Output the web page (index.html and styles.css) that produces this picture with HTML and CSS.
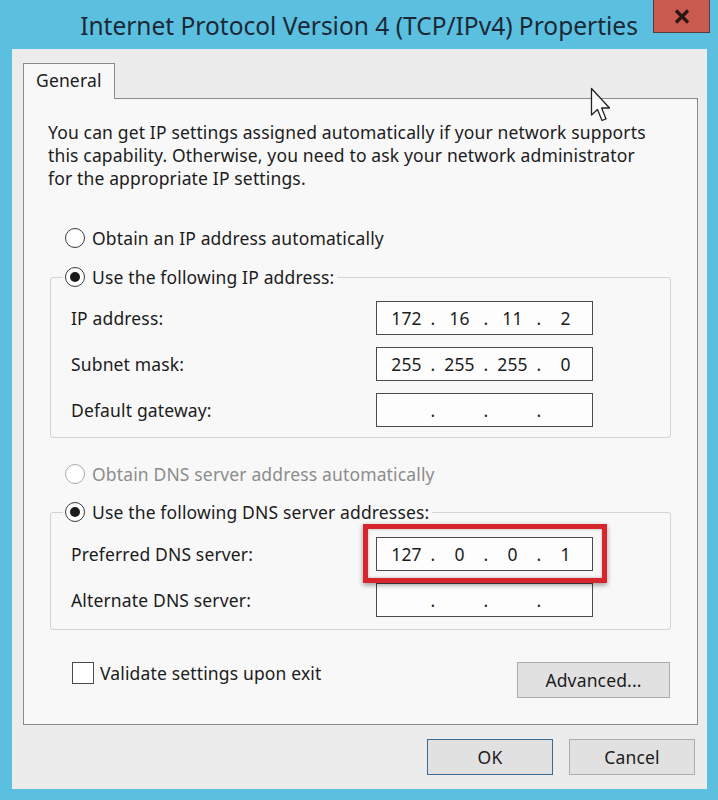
FILE: index.html
```html
<!DOCTYPE html>
<html>
<head>
<meta charset="utf-8">
<link rel="stylesheet" href="styles.css">
</head>
<body>
<div class="titlebar">
  <div class="title">Internet Protocol Version 4 (TCP/IPv4) Properties</div>
  <div class="close">
    <svg width="16" height="15" viewBox="0 0 16 15"><path d="M2 1.5 L14 13.5 M14 1.5 L2 13.5" stroke="#2a1714" stroke-width="3.4" fill="none"/></svg>
  </div>
</div>
<div class="dialog">
  <div class="tabs"><div class="tab">General</div></div>
  <div class="panel">
    <p class="intro">You can get IP settings assigned automatically if your network supports<br>this capability. Otherwise, you need to ask your network administrator<br>for the appropriate IP settings.</p>
    <div class="radio-row first"><span class="radio"></span><span>Obtain an IP address automatically</span></div>
    <fieldset class="group ip-group">
      <legend><span class="radio checked"></span><span>Use the following IP address:</span></legend>
      <div class="field">
        <span>IP address:</span>
        <div class="ipbox"><span>172</span><i>.</i><span>16</span><i>.</i><span>11</span><i>.</i><span>2</span></div>
      </div>
      <div class="field">
        <span>Subnet mask:</span>
        <div class="ipbox"><span>255</span><i>.</i><span>255</span><i>.</i><span>255</span><i>.</i><span>0</span></div>
      </div>
      <div class="field">
        <span>Default gateway:</span>
        <div class="ipbox"><span></span><i>.</i><span></span><i>.</i><span></span><i>.</i><span></span></div>
      </div>
    </fieldset>
    <div class="radio-row disabled"><span class="radio"></span><span>Obtain DNS server address automatically</span></div>
    <fieldset class="group dns-group">
      <legend><span class="radio checked"></span><span>Use the following DNS server addresses:</span></legend>
      <div class="field">
        <span>Preferred DNS server:</span>
        <div class="ipbox marked"><span>127</span><i>.</i><span>0</span><i>.</i><span>0</span><i>.</i><span>1</span><b class="highlight"></b></div>
      </div>
      <div class="field">
        <span>Alternate DNS server:</span>
        <div class="ipbox"><span></span><i>.</i><span></span><i>.</i><span></span><i>.</i><span></span></div>
      </div>
    </fieldset>
    <div class="bottom-row">
      <label class="check"><span class="box"></span><span>Validate settings upon exit</span></label>
      <button class="btn advanced">Advanced...</button>
    </div>
  </div>
  <div class="actions">
    <button class="btn default">OK</button>
    <button class="btn">Cancel</button>
  </div>
</div>
<svg class="cursor" width="22" height="38" viewBox="0 0 22 38">
  <path d="M1.5 1.5 V28 L7.5 22.5 L12 33.5 L16 31.8 L11.6 21 L19.5 21 Z" fill="#fff" stroke="#222" stroke-width="1.3" stroke-linejoin="round"/>
</svg>
</body>
</html>
```
FILE: styles.css
```css
html, body {
  margin: 0;
  padding: 0;
}
body {
  width: 718px;
  height: 800px;
  overflow: hidden;
  position: relative;
  background: #5bc0e0;
  font-family: "Noto Sans", "Open Sans", sans-serif;
  color: #1c1c1c;
}
.titlebar {
  height: 49px;
  display: flex;
  align-items: center;
  justify-content: center;
  position: relative;
}
.title {
  font-size: 24.5px;
  color: #1b2836;
  margin-top: 1px;
}
.close {
  position: absolute;
  top: 0;
  right: 8px;
  width: 57px;
  height: 33px;
  box-sizing: border-box;
  background: #c95a50;
  border: 1px solid #5a3a3a;
  border-top: none;
  display: flex;
  align-items: center;
  justify-content: center;
}
.dialog {
  margin-left: 12px;
  width: 695px;
  height: 740px;
  box-sizing: border-box;
  background: #ececec;
  padding: 14px 9px 0 11px;
}
.tabs {
  display: flex;
}
.tab {
  width: 92px;
  height: 36px;
  box-sizing: border-box;
  border: 1px solid #8a8a8a;
  border-bottom: none;
  background: #f8f8f8;
  margin-bottom: -1px;
  position: relative;
  z-index: 1;
  font-size: 17.5px;
  letter-spacing: 0.15px;
  line-height: 32px;
  padding-left: 12px;
}
.panel {
  height: 627px;
  box-sizing: border-box;
  border: 1px solid #8a8a8a;
  background: #f8f8f8;
  font-size: 17.5px;
  letter-spacing: 0.15px;
  display: flex;
  flex-direction: column;
}
.intro {
  margin: 22px 0 0 24px;
  line-height: 23px;
}
.radio-row {
  display: flex;
  align-items: center;
  gap: 7px;
  height: 28px;
  margin: 22px 0 0 41px;
}
.radio-row.first {
  margin-top: 34px;
}
.radio {
  width: 20px;
  height: 20px;
  box-sizing: border-box;
  border: 1px solid #3a3a3a;
  border-radius: 50%;
  background: #fff;
  display: flex;
  align-items: center;
  justify-content: center;
  flex: none;
}
.radio.checked::after {
  content: "";
  width: 10px;
  height: 10px;
  border-radius: 50%;
  background: #1a1a1a;
}
.disabled {
  color: #8c8c8c;
}
.disabled .radio {
  border-color: #aaaaaa;
}
.group {
  margin: 11px 26px 0 26px;
  border: 1px solid #d3d3d3;
  border-radius: 3px;
  padding: 10px 0 10px 12px;
  display: flex;
  flex-direction: column;
  gap: 12px;
  min-width: 0;
}
.dns-group {
  margin-top: 10px;
  padding-top: 11px;
  padding-bottom: 12px;
}
.group legend {
  display: flex;
  align-items: center;
  gap: 7px;
  height: 28px;
  padding: 0 3px 0 2px;
}
.field {
  display: grid;
  grid-template-columns: 305px 217px;
  align-items: center;
  margin-left: 8px;
}
.ipbox {
  height: 34px;
  box-sizing: border-box;
  border: 1px solid #4a4a4a;
  background: #fdfdfd;
  display: grid;
  grid-template-columns: 47px 6px 47px 6px 47px 6px 47px;
  align-items: center;
  padding-left: 6px;
  position: relative;
}
.ipbox span {
  text-align: center;
}
.ipbox i {
  font-style: normal;
  text-align: center;
}
.highlight {
  position: absolute;
  left: -14px;
  top: -14px;
  right: -15px;
  bottom: -13px;
  border: 5px solid #d6252d;
  box-shadow: 0 2px 5px rgba(0, 0, 0, 0.4), inset 0 0 3px rgba(0, 0, 0, 0.3);
  z-index: 2;
}
.bottom-row {
  display: flex;
  justify-content: space-between;
  align-items: flex-start;
  margin: 31px 27px 0 48px;
}
.check {
  display: flex;
  align-items: center;
  gap: 6px;
  height: 24px;
}
.check .box {
  width: 22px;
  height: 22px;
  box-sizing: border-box;
  border: 1px solid #4a4a4a;
  background: #fff;
}
.btn {
  font-family: inherit;
  font-size: 17.5px;
  letter-spacing: 0.15px;
  color: #1c1c1c;
  background: #e1e1e1;
  border: 1px solid #acacac;
  width: 126px;
  height: 36px;
  padding: 0;
}
.advanced {
  width: 153px;
  margin-top: 1px;
}
.default {
  border-color: #3c6b95;
}
.actions {
  display: flex;
  justify-content: flex-end;
  gap: 16px;
  margin: 14px 3px 0 0;
}
.cursor {
  position: absolute;
  left: 590px;
  top: 87px;
}
```
